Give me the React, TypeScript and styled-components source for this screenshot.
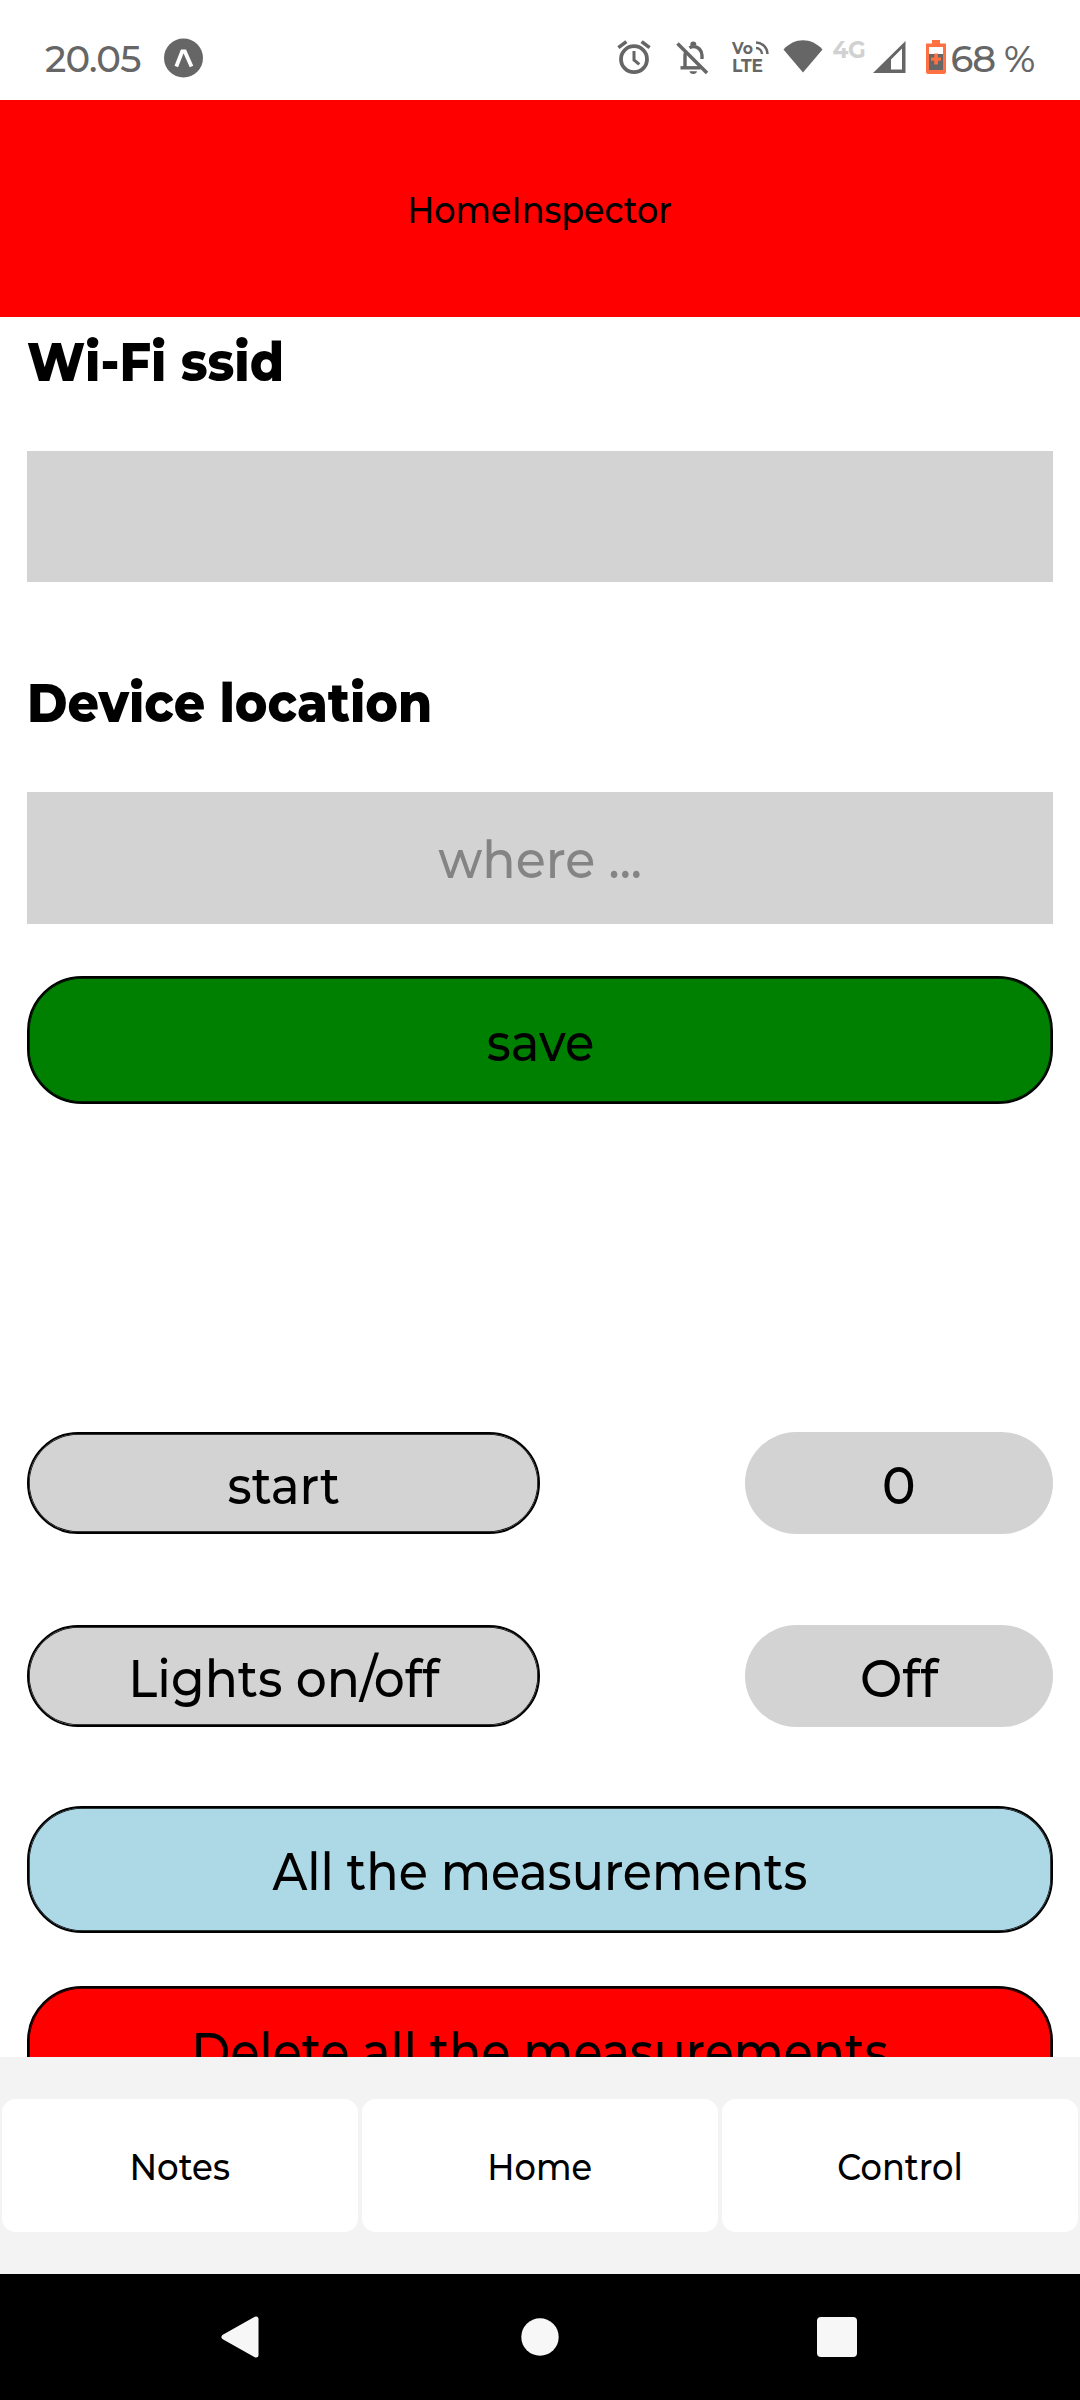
import React from 'react';
import styled, { createGlobalStyle } from 'styled-components';

const GlobalStyle = createGlobalStyle`
  * { box-sizing: border-box; }
  body { margin: 0; background: #fff; }
`;

const Screen = styled.div`
  display: flex;
  flex-direction: column;
  width: 1080px;
  height: 2400px;
  overflow: hidden;
  background: #fff;
  color: #000;
  font-family: Montserrat, Inter, sans-serif;
  font-weight: 500;
  font-variant-ligatures: none;
`;

const StatusBar = styled.div`
  display: flex;
  justify-content: space-between;
  height: 100px;
  padding: 40px 46px 26px 45px;
  color: #666;
`;

const StatusGroup = styled.div`
  display: flex;
  align-items: flex-start;
`;

const StatusText = styled.span<{ $spacing: number; $gap?: number }>`
  margin-left: ${p => p.$gap ?? 0}px;
  font-size: 37px;
  font-weight: 500;
  line-height: 37px;
  letter-spacing: ${p => p.$spacing}px;
  white-space: nowrap;
`;

const NetworkLabel = styled.span`
  margin-left: 10px;
  width: 40px;
  color: #d1d1d1;
  font-size: 23px;
  font-weight: 700;
  line-height: 20px;
  letter-spacing: -0.6px;
`;

const Icon = styled.svg<{ $gap?: number }>`
  display: block;
  flex: none;
  margin-left: ${p => p.$gap ?? 0}px;
  overflow: visible;
`;

const Header = styled.header`
  display: flex;
  align-items: center;
  justify-content: center;
  height: 217px;
  padding-top: 2px;
  background: #f00;
`;

const Label = styled.span<{ $size?: number; $stretch?: number }>`
  display: inline-block;
  font-size: ${p => p.$size ?? 53}px;
  transform: scaleX(${p => p.$stretch ?? 0.903});
  white-space: nowrap;
`;

const Content = styled.main`
  display: flex;
  flex-direction: column;
  height: 1740px;
  padding: 0 27px;
  overflow: hidden;
`;

const Heading = styled.h1<{ $top: number }>`
  flex: none;
  margin: ${p => p.$top}px 0 0;
  height: 134px;
  padding-top: 12px;
  font-size: 54px;
  line-height: 66px;
  font-weight: 800;
  transform: scaleX(0.909);
  transform-origin: left;
`;

const Field = styled.div<{ $height: number }>`
  display: flex;
  flex: none;
  align-items: center;
  justify-content: center;
  height: ${p => p.$height}px;
  padding-top: 2px;
  background: #d3d3d3;
  color: #848484;
`;

const Action = styled.button<{ $color: string; $top: number; $height: number }>`
  display: flex;
  flex: none;
  align-items: center;
  justify-content: center;
  height: ${p => p.$height}px;
  margin: ${p => p.$top}px 0 0;
  padding: 3px 0 0;
  border: 2px solid #000;
  border-radius: 55px;
  box-shadow: inset 0 0 0 0.7px #000;
  background: ${p => p.$color};
  color: #000;
  font: inherit;
`;

const ControlRow = styled.div<{ $top: number }>`
  display: flex;
  flex: none;
  justify-content: space-between;
  height: 102px;
  margin-top: ${p => p.$top}px;
`;

const Toggle = styled(Action)`
  width: 513px;
`;

const Value = styled.div`
  display: flex;
  align-items: center;
  justify-content: center;
  width: 308px;
  padding-top: 3px;
  border-radius: 55px;
  background: #d3d3d3;
`;

const Spacer = styled.div`
  flex: none;
  height: 328px;
`;

const TabBar = styled.nav`
  display: grid;
  grid-template-columns: repeat(3, 356px);
  gap: 4px;
  height: 217px;
  padding: 42px 2px;
  background: #f3f3f3;
`;

const Tab = styled.button`
  display: flex;
  align-items: center;
  justify-content: center;
  padding: 2px 0 0;
  border: 0;
  border-radius: 14px;
  background: #fff;
  color: #000;
  font: inherit;
`;

const SystemNav = styled.div`
  display: flex;
  align-items: flex-start;
  justify-content: space-between;
  height: 126px;
  padding: 42px 223px 0 221px;
  background: #000;
`;

const ExpoIcon = () => (
  <Icon $gap={23} width="39" height="39" viewBox="0 0 39 39">
    <circle cx="19.5" cy="18" r="19.5" fill="#666" />
    <path d="M12.3 26.5 18.2 11.500h2.600L27.500 26.500" fill="none" stroke="#fff" strokeWidth="3.8" />
  </Icon>
);

const AlarmIcon = () => (
  <Icon width="34" height="36" viewBox="0 0 34 36" fill="none" stroke="#666">
    <circle cx="17" cy="19.2" r="13" strokeWidth="3.8" />
    <path d="M17 11v9l5.3 4.3" strokeWidth="3" />
    <path d="M1.4 7.6 9.4 1.6M24.6 1.6l8 6" strokeWidth="3.6" />
  </Icon>
);

const BellOffIcon = () => (
  <Icon $gap={25} width="34" height="36" viewBox="0 0 34 36" fill="none" stroke="#666">
    <path d="M9 29V16c0-1.4.3-2.8.9-4M13.5 7.8C15 6.8 16 6.6 17.5 6.6c5 0 8.5 4 8.5 9v3.5" strokeWidth="3.4" />
    <path d="M4.5 27.8h20" strokeWidth="3.4" />
    <path d="M1.5 3.5 31 33" strokeWidth="3.6" />
    <path d="M14.3 5.5V4.5a3 3 0 0 1 6 0v1z M13.5 31.2h7.5a3.8 3.3 0 0 1-7.5 0z" fill="#666" stroke="none" />
  </Icon>
);

const VolteText = styled.text`
  font-family: Montserrat, Inter, sans-serif;
  font-weight: 700;
  fill: #666;
`;

const VolteIcon = () => (
  <Icon $gap={22} width="38" height="36" viewBox="0 0 38 36">
    <VolteText x="0" y="13.5" fontSize="17" textLength="21" lengthAdjust="spacingAndGlyphs">Vo</VolteText>
    <VolteText x="0" y="32" fontSize="18.5" textLength="31" lengthAdjust="spacingAndGlyphs">LTE</VolteText>
    <path d="M24 8a6 6 0 0 1 6 6M24 2.500a11.500 11.500 0 0 1 11.500 11.500" fill="none" stroke="#666" strokeWidth="2.4" />
  </Icon>
);

const WifiIcon = () => (
  <Icon $gap={13} width="40" height="34" viewBox="0 0 40 34">
    <path d="M20 32.5.5 9.5C6 3.5 13 .3 20 .3S34 3.5 39.5 9.5z" fill="#666" />
  </Icon>
);

const SignalIcon = () => (
  <Icon width="33" height="34" viewBox="0 0 33 34">
    <path fillRule="evenodd" d="M0 33 32.5 1v32zM18 19.5V29.5H29V8.5z" fill="#666" />
  </Icon>
);

const BatteryIcon = () => (
  <Icon $gap={20} width="20" height="34" viewBox="0 0 20 34">
    <path d="M0 3.5h6V0h8v3.5h6V32a2 2 0 0 1-2 2H2a2 2 0 0 1-2-2z" fill="#ff7043" />
    <path d="M3 7h14v7H3z" fill="#fff" />
    <path d="M3 14h14v16H3z" fill="#666" />
    <path d="M8.3 13.5h3.6v4H15v3.3h-3.1v3.7H8.3v-3.7H5v-3.3h3.3z" fill="#ff7043" />
  </Icon>
);

export default function App() {
  return (
    <Screen>
      <GlobalStyle />
      <StatusBar>
        <StatusGroup>
          <StatusText $spacing={-0.7}>20.05</StatusText>
          <ExpoIcon />
        </StatusGroup>
        <StatusGroup>
          <AlarmIcon />
          <BellOffIcon />
          <VolteIcon />
          <WifiIcon />
          <NetworkLabel>4G</NetworkLabel>
          <SignalIcon />
          <BatteryIcon />
          <StatusText $spacing={-1.1} $gap={5}>68 %</StatusText>
        </StatusGroup>
      </StatusBar>
      <Header><Label $size={37}>HomeInspector</Label></Header>
      <Content>
        <Heading $top={0}>Wi-Fi ssid</Heading>
        <Field $height={131} />
        <Heading $top={76}>Device location</Heading>
        <Field $height={132}><Label $stretch={0.926}>where ...</Label></Field>
        <Action $color="#008000" $top={52} $height={128}><Label>save</Label></Action>
        <Spacer />
        <ControlRow $top={0}>
          <Toggle $color="#d3d3d3" $top={0} $height={102}><Label $stretch={0.91}>start</Label></Toggle>
          <Value><Label $stretch={0.95}>0</Label></Value>
        </ControlRow>
        <ControlRow $top={91}>
          <Toggle $color="#d3d3d3" $top={0} $height={102}><Label $stretch={0.921}>Lights on/off</Label></Toggle>
          <Value><Label $stretch={0.95}>Off</Label></Value>
        </ControlRow>
        <Action $color="#add8e6" $top={79} $height={127}><Label $stretch={0.898}>All the measurements</Label></Action>
        <Action $color="#f00" $top={53} $height={127}><Label $stretch={0.894}>Delete all the measurements</Label></Action>
      </Content>
      <TabBar>
        <Tab><Label $size={37} $stretch={0.92}>Notes</Label></Tab>
        <Tab><Label $size={37} $stretch={0.908}>Home</Label></Tab>
        <Tab><Label $size={37} $stretch={0.909}>Control</Label></Tab>
      </TabBar>
      <SystemNav>
        <Icon width="38" height="42" viewBox="0 0 38 42"><path d="M3 21 35 3v36z" fill="#f7f7f7" stroke="#f7f7f7" strokeWidth="5" strokeLinejoin="round" /></Icon>
        <Icon $gap={4} width="38" height="42" viewBox="0 0 38 42"><circle cx="19" cy="21" r="18.7" fill="#f7f7f7" /></Icon>
        <Icon width="40" height="42" viewBox="0 0 40 42"><rect y="1" width="40" height="40" rx="4" fill="#f7f7f7" /></Icon>
      </SystemNav>
    </Screen>
  );
}
